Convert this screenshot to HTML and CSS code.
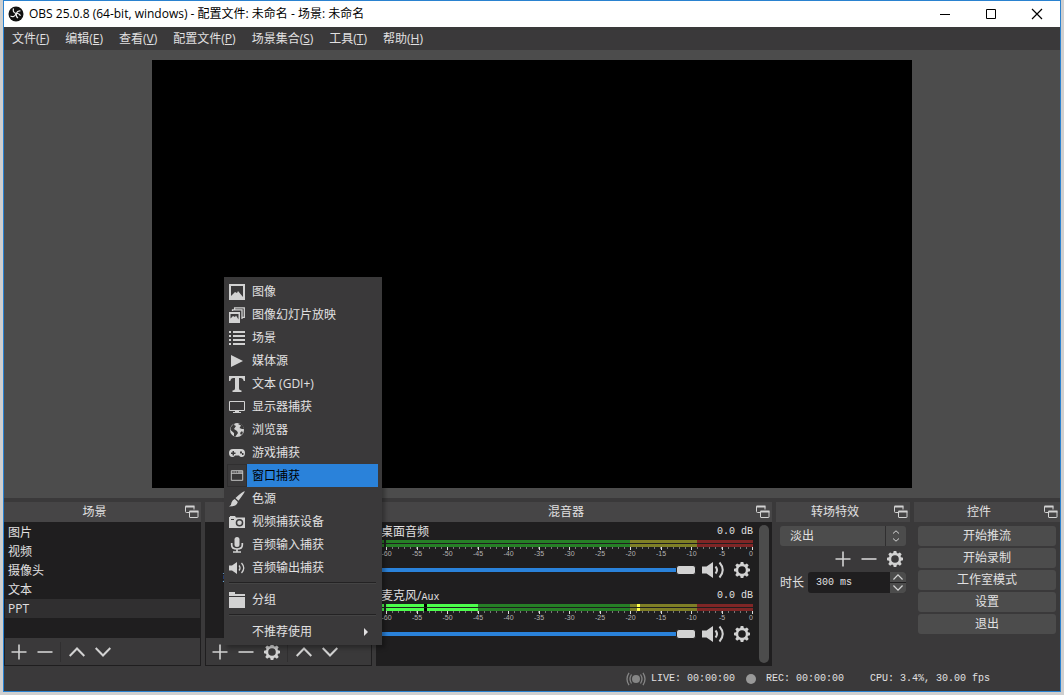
FILE: index.html
```html
<!DOCTYPE html>
<html lang="zh-CN">
<head>
<meta charset="utf-8">
<title>OBS 25.0.8</title>
<link rel="stylesheet" href="styles.css">
</head>
<body>
<svg class="sprite" aria-hidden="true">
  <symbol id="plus" viewBox="0 0 16 16"><path d="M8 0.500v15M.5 8h15" stroke="currentColor" stroke-width="1.6" fill="none"/></symbol>
  <symbol id="minus" viewBox="0 0 16 16"><path d="M.5 8h15" stroke="currentColor" stroke-width="1.6" fill="none"/></symbol>
  <symbol id="up" viewBox="0 0 16 16"><path d="M.7 12 8 4.500 15.300 12" stroke="currentColor" stroke-width="2" fill="none"/></symbol>
  <symbol id="down" viewBox="0 0 16 16"><path d="M.7 4 8 11.500 15.300 4" stroke="currentColor" stroke-width="2" fill="none"/></symbol>
  <symbol id="gear" viewBox="0 0 16 16"><path fill="currentColor" fill-rule="evenodd" d="M6.700 0h2.600l.5 2.100 1.200.5 1.900-1.200 1.800 1.800-1.200 1.900.5 1.200 2 .4v2.600l-2 .5-.5 1.200 1.200 1.900-1.800 1.800-1.900-1.200-1.200.5-.5 2H6.700l-.5-2-1.200-.5-1.900 1.200-1.800-1.800L2.500 11 2 9.800l-2-.5V6.700l2-.4.5-1.200-1.200-1.900 1.800-1.800L5 2.600l1.200-.5zM8 4.200a3.800 3.800 0 1 0 0 7.600 3.800 3.800 0 0 0 0-7.600z"/></symbol>
  <symbol id="popout" viewBox="0 0 14 14"><g fill="none" stroke="currentColor"><path d="M5 7.500H1.500Q.5 7.500.5 6.500V1.500h8.500V4.500"/><path d="M.5 1.500h9M4.500 6.500h9" stroke-width="2"/><path d="M4.500 6.500h8.500v5.500q0 .5-.5.500H5q-.5 0-.5-.5z"/></g></symbol>
  <symbol id="speaker" viewBox="0 0 22 18"><path fill="currentColor" d="M0 5.500h4.500L11 1v16l-6.500-4.500H0z"/><path d="M13.500 5.500q3 3.500 0 7M17.500 1.500q6.500 7.500 0 15" fill="none" stroke="currentColor" stroke-width="2"/></symbol>
  <symbol id="image" viewBox="0 0 16 16"><path fill="currentColor" fill-rule="evenodd" d="M0 0h16v16H0zM2 2v10l4-4 2 1 1-2 5 6V2z" /><path fill="currentColor" d="M2 2v3l2.500 1L2 9v5h10L5 6l3-1 6 7V9L9 4z" opacity="0"/></symbol>
  <symbol id="slides" viewBox="0 0 16 16"><path fill="none" stroke="currentColor" stroke-width="1.300" d="M3.500 4V2.800H13V12M5.600 2.500V.8h9.700v9.500h-2"/><path fill="currentColor" fill-rule="evenodd" d="M0 5h11v11H0zM1.500 7v4.500L4 9l2 1 1-1.500 2.500 4V7z"/></symbol>
  <symbol id="list" viewBox="0 0 16 16"><path fill="currentColor" d="M0 1h2v2H0zM4 1h12v2H4zM0 5h2v2H0zM4 5h12v2H4zM0 9h2v2H0zM4 9h12v2H4zM0 13h2v2H0zM4 13h12v2H4z"/></symbol>
  <symbol id="play" viewBox="0 0 16 16"><path fill="currentColor" d="M2 2l12 6-12 6z"/></symbol>
  <symbol id="type" viewBox="0 0 16 16"><path fill="currentColor" d="M0 0h16v5h-1.300Q14.200 2 11.500 2H10v10.500q0 2 2.500 2V16h-9v-1.500q2.500 0 2.500-2V2H4.500Q1.800 2 1.300 5H0z"/></symbol>
  <symbol id="monitor" viewBox="0 0 16 16"><path fill="none" stroke="currentColor" d="M.5 2.500h15v9H.5z"/><path fill="currentColor" d="M6 12h4v1h2v1H4v-1h2z"/></symbol>
  <symbol id="globe" viewBox="0 0 16 16"><circle cx="8" cy="8" r="7" fill="currentColor"/><path fill="#3a3939" d="M6 1l-1 2 2 1-2 3 3 2 1 2-3 4-1-1V11L1.500 8 2 5l3-3.500zM9 2l3 1.500L10.500 6 13 7l2 0-1-3-3-2.800zM13 9l-2 2 1 2 2-2z"/></symbol>
  <symbol id="gamepad" viewBox="0 0 16 16"><path fill="currentColor" fill-rule="evenodd" d="M4 4h8q4 0 4 4t-3.500 4Q11 12 10 10.500H6Q5 12 3.500 12 0 12 0 8t4-4zM3.500 6v1.500H2v1.500h1.500v1.500H5V9h1.500V7.500H5V6zM11 6.500v2h2v-2zM13 8v2h1.500V8z"/></symbol>
  <symbol id="window" viewBox="0 0 16 16"><path fill="none" stroke="currentColor" d="M1.500 2.500h13v11h-13zM1.500 5.500h13"/><path fill="currentColor" d="M3 3.500h1v1H3zM5 3.500h1v1H5zM7 3.500h1v1H7zM9 3.500h5v1H9z"/></symbol>
  <symbol id="brush" viewBox="0 0 16 16"><path fill="currentColor" d="M15.800.2Q16 1 9.500 9.800L6.500 7Q14-.2 15.800.2zM5.800 8l3 3Q8 15.500 0 15.500q2.500-1.200 2.500-4Q3.500 8.500 5.800 8z"/></symbol>
  <symbol id="camera" viewBox="0 0 16 16"><path fill="currentColor" fill-rule="evenodd" d="M1 2h5l1 1.500h9V14H0V3h1zM10.500 5a3.800 3.800 0 1 0 0 7.600 3.800 3.800 0 0 0 0-7.600zM2 5v1h3V5z"/><circle cx="10.500" cy="8.800" r="2.300" fill="currentColor"/></symbol>
  <symbol id="mic" viewBox="0 0 16 16"><rect x="5.500" width="5" height="10" rx="2.500" fill="currentColor"/><path d="M2.700 6v2q0 4 5.300 4t5.300-4V6M8 12v3M4 15h8" fill="none" stroke="currentColor" stroke-width="1.700"/></symbol>
  <symbol id="sound" viewBox="0 0 16 16"><path fill="currentColor" d="M0 5.500h3L8 2v12l-5-3.500H0z"/><path d="M10 5.500q2 2.500 0 5M12.500 3q4.500 5 0 10" fill="none" stroke="currentColor" stroke-width="1.300"/></symbol>
  <symbol id="folder" viewBox="0 0 16 16"><path fill="currentColor" d="M0 0h6v2h10v2H0zM0 5h16v11H0z"/></symbol>
</svg>

<div class="window">
  <header class="titlebar">
    <svg class="logo" viewBox="0 0 16 16" aria-hidden="true"><circle cx="8" cy="8" r="7.500" fill="#111"/><g fill="none" stroke="#eee" stroke-width="1.200"><path d="M5.500 2.500Q4.500 6 7.500 7.300 11 7 12.500 9.800"/><path d="M12.500 5Q9.500 4.500 8.300 7.500 7.800 10.500 10 12"/><path d="M2.500 10q3.500 2 5.500-2"/></g></svg>
    <h1 class="caption">OBS 25.0.8 (64-bit, windows) - 配置文件: 未命名 - 场景: 未命名</h1>
    <button class="sysbtn" aria-label="最小化"><svg viewBox="0 0 12 12"><path d="M1 6.500h10" stroke="#000"/></svg></button>
    <button class="sysbtn" aria-label="最大化"><svg viewBox="0 0 12 12"><path d="M1.500 1.500h9v9h-9z" fill="none" stroke="#000"/></svg></button>
    <button class="sysbtn" aria-label="关闭"><svg viewBox="0 0 12 12"><path d="M1 1l10 10M11 1 1 11" stroke="#000" stroke-width="1.200"/></svg></button>
  </header>

  <nav class="menubar">
    <button>文件(<u>F</u>)</button><button>编辑(<u>E</u>)</button><button>查看(<u>V</u>)</button><button>配置文件(<u>P</u>)</button><button>场景集合(<u>S</u>)</button><button>工具(<u>T</u>)</button><button>帮助(<u>H</u>)</button>
  </nav>

  <main class="preview"><div class="canvas"></div></main>

  <div class="docks">
    <section class="dock">
      <header class="dock-title"><h2>场景</h2><button class="pop" aria-label="浮动"><svg><use href="#popout"/></svg></button></header>
      <div class="panel">
        <ul class="list">
          <li>图片</li><li>视频</li><li>摄像头</li><li>文本</li><li class="current">PPT</li>
        </ul>
        <div class="toolbar">
          <button aria-label="添加"><svg><use href="#plus"/></svg></button><button aria-label="移除"><svg><use href="#minus"/></svg></button><span class="divider"></span><button aria-label="上移"><svg><use href="#up"/></svg></button><button aria-label="下移"><svg><use href="#down"/></svg></button>
        </div>
      </div>
    </section>

    <section class="dock">
      <header class="dock-title"></header>
      <div class="panel">
        <div class="list empty"><p>或者右击此处添加一个。</p></div>
        <div class="toolbar">
          <button aria-label="添加"><svg><use href="#plus"/></svg></button><button aria-label="移除"><svg><use href="#minus"/></svg></button><button aria-label="属性"><svg><use href="#gear"/></svg></button><span class="divider"></span><button aria-label="上移"><svg><use href="#up"/></svg></button><button aria-label="下移"><svg><use href="#down"/></svg></button>
        </div>
      </div>
    </section>

    <section class="dock">
      <header class="dock-title"><h2>混音器</h2><button class="pop" aria-label="浮动"><svg><use href="#popout"/></svg></button></header>
      <div class="mixer">
        <div class="channels">
          <div class="channel">
            <div class="channel-head"><label for="desk">桌面音频</label><span class="mono">0.0 dB</span></div>
            <div class="meter"><i class="led"></i><div class="bar"></div><i class="led"></i><div class="bar"></div></div>
            <div class="scale"><div class="ticks"></div>
              <ol><li>-60</li><li>-55</li><li>-50</li><li>-45</li><li>-40</li><li>-35</li><li>-30</li><li>-25</li><li>-20</li><li>-15</li><li>-10</li><li>-5</li><li>0</li></ol></div>
            <div class="channel-controls"><input id="desk" type="range" value="100"><button class="mute" aria-label="静音"><svg><use href="#speaker"/></svg></button><button class="cfg" aria-label="设置"><svg><use href="#gear"/></svg></button></div>
          </div>
          <div class="channel live">
            <div class="channel-head"><label for="mic-vol">麦克风/<span class="mono">Aux</span></label><span class="mono">0.0 dB</span></div>
            <div class="meter"><i class="led"></i><div class="bar"></div><i class="led"></i><div class="bar"></div></div>
            <div class="scale"><div class="ticks"></div>
              <ol><li>-60</li><li>-55</li><li>-50</li><li>-45</li><li>-40</li><li>-35</li><li>-30</li><li>-25</li><li>-20</li><li>-15</li><li>-10</li><li>-5</li><li>0</li></ol></div>
            <div class="channel-controls"><input id="mic-vol" type="range" value="100"><button class="mute" aria-label="静音"><svg><use href="#speaker"/></svg></button><button class="cfg" aria-label="设置"><svg><use href="#gear"/></svg></button></div>
          </div>
        </div>
        <div class="scrollbar"></div>
      </div>
    </section>

    <section class="dock">
      <header class="dock-title"><h2>转场特效</h2><button class="pop" aria-label="浮动"><svg><use href="#popout"/></svg></button></header>
      <div class="transitions">
        <div class="combo">
          <select aria-label="转场特效"><option>淡出</option></select>
          <span class="combo-arrows"><svg viewBox="0 0 8 12"><path d="M1 3.500 4 .8l3 2.700M1 8.500l3 2.700 3-2.700" fill="none" stroke="currentColor"/></svg></span>
        </div>
        <div class="row-end"><button aria-label="添加"><svg><use href="#plus"/></svg></button><button aria-label="移除"><svg><use href="#minus"/></svg></button><button aria-label="属性"><svg><use href="#gear"/></svg></button></div>
        <div class="duration">
          <label for="dur">时长</label>
          <div class="spin"><input id="dur" class="mono" type="text" value="300 ms"><div class="spin-btns"><button aria-label="增加"><svg><use href="#up"/></svg></button><button aria-label="减少"><svg><use href="#down"/></svg></button></div></div>
        </div>
      </div>
    </section>

    <section class="dock">
      <header class="dock-title"><h2>控件</h2><button class="pop" aria-label="浮动"><svg><use href="#popout"/></svg></button></header>
      <div class="controls">
        <button>开始推流</button><button>开始录制</button><button>工作室模式</button><button>设置</button><button>退出</button>
      </div>
    </section>
  </div>

  <footer class="status mono">
    <svg class="signal" viewBox="0 0 20 14" aria-hidden="true"><circle cx="10" cy="7" r="4" fill="#858585"/><path d="M5.500 2.500q-3 4.500 0 9M14.500 2.500q3 4.500 0 9M3 .8q-4 6.200 0 12.400M17 .8q4 6.200 0 12.400" fill="none" stroke="#858585" stroke-width="1.300"/></svg>
    <span class="live-time">LIVE: 00:00:00</span>
    <span class="dot"></span>
    <span class="rec-time">REC: 00:00:00</span>
    <span>CPU: 3.4%, 30.00 fps</span>
  </footer>

  <div class="popup" role="menu">
    <button role="menuitem"><svg><use href="#image"/></svg><span>图像</span></button>
    <button role="menuitem"><svg><use href="#slides"/></svg><span>图像幻灯片放映</span></button>
    <button role="menuitem"><svg><use href="#list"/></svg><span>场景</span></button>
    <button role="menuitem"><svg><use href="#play"/></svg><span>媒体源</span></button>
    <button role="menuitem"><svg><use href="#type"/></svg><span>文本 (GDI+)</span></button>
    <button role="menuitem"><svg><use href="#monitor"/></svg><span>显示器捕获</span></button>
    <button role="menuitem"><svg><use href="#globe"/></svg><span>浏览器</span></button>
    <button role="menuitem"><svg><use href="#gamepad"/></svg><span>游戏捕获</span></button>
    <button role="menuitem" class="active"><svg><use href="#window"/></svg><span>窗口捕获</span></button>
    <button role="menuitem"><svg><use href="#brush"/></svg><span>色源</span></button>
    <button role="menuitem"><svg><use href="#camera"/></svg><span>视频捕获设备</span></button>
    <button role="menuitem"><svg><use href="#mic"/></svg><span>音频输入捕获</span></button>
    <button role="menuitem"><svg><use href="#sound"/></svg><span>音频输出捕获</span></button>
    <hr>
    <button role="menuitem"><svg><use href="#folder"/></svg><span>分组</span></button>
    <hr>
    <button role="menuitem" class="sub"><svg></svg><span>不推荐使用</span></button>
  </div>
</div>
</body>
</html>
```

FILE: styles.css
```css
* { box-sizing: border-box; margin: 0; padding: 0; }

body {
  min-height: 100vh;
  padding: 0 3px 3px;
  background: #cfcfcf;
  color: #e1e0e1;
  font: 12px/18px "Open Sans", "Noto Sans CJK SC", sans-serif;
}

button, input, select { font: inherit; color: inherit; background: none; border: 0; }
button { display: flex; align-items: center; justify-content: center; }
ul, ol { list-style: none; }
h1, h2 { font-size: 12px; font-weight: 400; }
svg { display: block; width: 16px; height: 16px; color: #d2d2d2; }
.sprite { position: absolute; width: 0; height: 0; }
.mono { font-family: "Liberation Mono", "Noto Sans CJK SC", monospace; font-size: 10px; }

.window {
  position: relative;
  display: flex;
  flex-direction: column;
  height: calc(100vh - 3px);
  border: 1px solid #2a82d0;
  background: #3a393a;
}

/* Title bar and menu bar */
.titlebar { display: flex; align-items: center; height: 26px; padding-left: 4px; background: #fff; color: #000; }
.logo { margin-right: 5px; }
.caption { flex: 1; }
.sysbtn { width: 46px; height: 26px; }
.sysbtn svg { width: 12px; height: 12px; }
.menubar { display: flex; height: 23px; gap: 16px; padding-left: 8px; }

/* Preview */
.preview { display: flex; flex: 1; min-height: 0; justify-content: center; padding: 10px; background: #4c4c4c; }
.canvas { height: 100%; aspect-ratio: 760 / 428; background: #000; }

/* Docks */
.docks { display: grid; grid-template-columns: 197fr 167fr 396fr 134fr 146fr; gap: 4px; padding-top: 4px; }
.dock { display: flex; flex-direction: column; min-width: 0; height: 164px; }
.dock-title { display: flex; align-items: center; height: 20px; padding-right: 2px; background: #464546; }
.dock-title h2 { flex: 1; text-align: center; }
.pop svg { width: 14px; height: 14px; }
.panel { display: flex; flex: 1; flex-direction: column; border: 1px solid #1f1e1f; border-top: 0; }
.list { flex: 1; padding-top: 1px; background: #1f1e1f; }
.list li { height: 19px; padding-left: 3px; line-height: 19px; }
.list .current { background: #302f30; }
.empty { display: flex; align-items: center; justify-content: center; white-space: nowrap; }
.empty p { padding-bottom: 6px; }
.toolbar { display: flex; align-items: center; height: 27px; padding-left: 1px; }
.toolbar button, .row-end button { width: 26px; height: 26px; }
.divider { width: 1px; height: 20px; margin: 0 3px 0 2px; background: #302f30; }

/* Mixer */
.mixer { display: flex; flex: 1; gap: 6px; padding: 3px 3px 3px 5px; background: #1f1e1f; }
.channels { flex: 1; min-width: 0; }
.scrollbar { width: 10px; border-radius: 5px; background: #4c4c4c; }
.channel { margin-bottom: 6px; }
.channel-head { display: flex; justify-content: space-between; height: 15px; line-height: 14px; }
.meter { display: grid; grid-template-columns: 3px 1fr; gap: 1px 2px; }
.led { height: 3px; background: #267f26; }
.bar { height: 3px; background: linear-gradient(to right, #267f26 66.500%, #7f7f26 66.500% 84.700%, #7f2626 84.700%); }
.live .led { background: #4cff4c; }
.live .bar {
  background: linear-gradient(to right, #4cff4c 10.400%, #000 10.400% 11.200%, #4cff4c 11.200% 25.100%, #267f26 25.100% 66.500%, #7f7f26 66.500% 68.400%, #ffff4c 68.400% 69.200%, #7f7f26 69.200% 84.700%, #7f2626 84.700%);
}
.scale { padding-left: 5px; }
.ticks {
  height: 3px;
  background:
    repeating-linear-gradient(to right, #ddd 0 1px, transparent 1px calc((100% - 1px) / 12)),
    repeating-linear-gradient(to right, #777 0 1px, transparent 1px calc((100% - 1px) / 60)) 0 0 / 100% 2px no-repeat;
}
.scale ol { display: flex; justify-content: space-between; height: 7px; color: #b4b4b4; font: 7px/7px "Liberation Sans", sans-serif; }
.scale li { display: flex; justify-content: center; width: 1px; }
.scale li:last-child { justify-content: flex-end; }
.channel-controls { display: flex; align-items: center; height: 26px; padding-right: 3px; }
.channel-controls input { flex: 1; min-width: 0; height: 10px; margin-right: 6px; appearance: none; background: linear-gradient(#2a82da, #2a82da) center / 100% 4px no-repeat; }
.channel-controls input::-webkit-slider-thumb { appearance: none; width: 20px; height: 10px; border: 1px solid #1f1e1f; border-radius: 3px; background: #d2d2d2; }
.mute svg { width: 22px; height: 18px; }
.cfg { margin-left: 10px; }

/* Transitions */
.transitions { padding: 4px; }
.combo { display: flex; height: 20px; overflow: hidden; border-radius: 3px; background: #4c4c4c; }
.combo select { flex: 1; min-width: 0; padding-left: 10px; appearance: none; }
.combo-arrows { display: flex; align-items: center; justify-content: center; width: 21px; border-left: 1px solid #302f30; }
.combo-arrows svg { width: 8px; height: 12px; }
.row-end { display: flex; justify-content: flex-end; margin-right: -2px; }
.duration { display: flex; align-items: center; gap: 4px; white-space: nowrap; }
.spin { display: flex; flex: 1; min-width: 0; height: 21px; overflow: hidden; border-radius: 3px; background: #1f1e1f; }
.spin input { flex: 1; min-width: 0; padding-left: 8px; }
.spin-btns { display: grid; gap: 1px; width: 16px; }
.spin-btns button { height: 10px; background: #4c4c4c; }
.spin-btns svg { width: 10px; height: 10px; }

/* Controls */
.controls { display: grid; gap: 2px; padding: 4px; }
.controls button { height: 20px; border-radius: 3px; background: #4c4c4c; }

/* Status bar */
.status { display: flex; align-items: center; justify-content: flex-end; height: 25px; padding-right: 70px; white-space: pre; }
.signal { width: 20px; height: 14px; margin-right: 5px; }
.dot { width: 10px; height: 10px; margin: 0 10px 0 11px; border-radius: 50%; background: #999; }
.rec-time { margin-right: 26px; }

/* Source type menu, floating over the docks */
.popup { position: absolute; left: 220px; bottom: 46px; width: 158px; padding: 3px 4px 2px 3px; background: #3a393a; box-shadow: 3px 3px 4px rgba(0, 0, 0, .3); }
.popup button { width: 100%; height: 23px; justify-content: flex-start; }
.popup svg { width: 20px; padding: 0 2px; }
.popup span { flex: 1; height: 23px; padding-left: 5px; line-height: 23px; text-align: left; }
.popup .active svg { height: 23px; padding: 2px; border: 1px solid #302f30; }
.popup .active span { background: #2a82da; color: #000; }
.popup hr { height: 2px; margin: 3px 2px 4px; border: 0; border-top: 1px solid #232223; border-bottom: 1px solid #444; }
.popup .sub::after { content: ""; margin-right: 10px; border: 4px solid transparent; border-left-color: #e1e0e1; border-right: 0; }
```
